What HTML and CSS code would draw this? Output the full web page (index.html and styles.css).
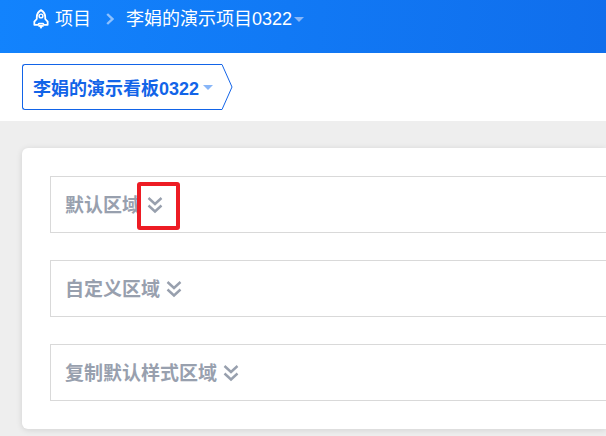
FILE: index.html
```html
<!DOCTYPE html>
<html lang="zh-CN">
<head>
  <meta charset="UTF-8">
  <meta name="viewport" content="width=device-width, initial-scale=1.0">
  <title>李娟的演示项目0322</title>
  <link rel="stylesheet" href="styles.css">
</head>
<body>
  <svg class="sprite" aria-hidden="true">
    <symbol id="double-down" viewBox="0 0 16 18">
      <path d="M1.5 2 L8 8 L14.5 2 M1.5 9.5 L8 15.5 L14.5 9.5" fill="none" stroke="currentColor" stroke-width="2.4"/>
    </symbol>
  </svg>

  <header class="header">
    <a class="header-link" href="#">
      <svg class="rocket" viewBox="0 0 14 18" aria-hidden="true">
        <path d="M7 1 C4.6 2.4 3.2 4.6 3.2 7.4 V9 L1 11.4 V14.2 H4.4 L5.2 13.2 H8.8 L9.6 14.2 H13 V11.4 L10.8 9 V7.4 C10.8 4.6 9.4 2.4 7 1 Z" fill="none" stroke="currentColor" stroke-width="1.6" stroke-linejoin="round"/>
        <circle cx="7" cy="6.3" r="1.7" fill="none" stroke="currentColor" stroke-width="1.3"/>
        <path d="M4.6 14.4 H9.4 V16 H8.4 L7 18 L5.6 16 H4.6 Z" fill="currentColor"/>
      </svg>
      <span>项目</span>
    </a>
    <svg class="separator" viewBox="0 0 8 12" aria-hidden="true">
      <path d="M1.2 1 L6.4 6 L1.2 11" fill="none" stroke="currentColor" stroke-width="2.4"/>
    </svg>
    <button type="button" class="project-btn">李娟的演示项目0322<span class="caret"></span></button>
  </header>

  <nav class="board-bar">
    <button type="button" class="board-btn">
      <span class="board-name">李娟的演示看板0322<span class="caret"></span></span>
      <svg class="board-tip" viewBox="0 0 11 46" aria-hidden="true">
        <path d="M0 0.5 L10 23 L0 45.5" fill="none" stroke="currentColor"/>
      </svg>
    </button>
  </nav>

  <main class="content">
    <div class="panel">
      <section class="area">
        <h2>默认区域</h2>
        <button type="button" class="toggle-btn marked" aria-label="展开默认区域">
          <svg viewBox="0 0 16 18"><use href="#double-down"/></svg>
        </button>
      </section>
      <section class="area">
        <h2>自定义区域</h2>
        <button type="button" class="toggle-btn" aria-label="展开自定义区域">
          <svg viewBox="0 0 16 18"><use href="#double-down"/></svg>
        </button>
      </section>
      <section class="area">
        <h2>复制默认样式区域</h2>
        <button type="button" class="toggle-btn" aria-label="展开复制默认样式区域">
          <svg viewBox="0 0 16 18"><use href="#double-down"/></svg>
        </button>
      </section>
    </div>
  </main>
</body>
</html>
```

FILE: styles.css
```css
* {
  box-sizing: border-box;
}

body {
  margin: 0;
  min-height: 100vh;
  font-family: "Liberation Sans", "Noto Sans CJK SC", sans-serif;
  background-color: #eee;
}

button {
  padding: 0;
  border: none;
  background: none;
  font-family: inherit;
  cursor: pointer;
}

svg {
  display: block;
}

.sprite {
  display: none;
}

/* Top bar */
.header {
  display: flex;
  align-items: center;
  height: 53px;
  padding: 0 33px 15px;
  color: #fff;
  font-size: 18px;
  line-height: 24px;
  background: linear-gradient(95deg, #1283fd, #106eec);
}

.header-link {
  display: flex;
  align-items: center;
  gap: 6px;
  color: inherit;
  text-decoration: none;
}

.rocket {
  width: 16px;
  height: 20px;
}

.separator {
  width: 8px;
  height: 12px;
  margin: 0 12px 0 15px;
  color: #8dc1fe;
}

.project-btn {
  display: flex;
  align-items: center;
  gap: 2px;
  color: inherit;
  font-size: 18px;
  line-height: 24px;
}

.caret {
  border: 5px solid transparent;
  border-top-color: #88b6f8;
  border-bottom: none;
}

/* Board switcher */
.board-bar {
  display: flex;
  padding: 11px 22px;
  background-color: #fff;
}

.board-btn {
  display: flex;
  color: #1264e8;
}

.board-name {
  display: flex;
  align-items: center;
  gap: 4px;
  height: 46px;
  padding: 0 9px 0 10px;
  border: 1px solid #1264e8;
  border-right: none;
  border-radius: 3px 0 0 3px;
  font-size: 18px;
  font-weight: bold;
}

.board-tip {
  width: 11px;
  height: 46px;
}

/* Areas */
.content {
  padding: 27px 0 7px 22px;
}

.panel {
  display: flex;
  flex-direction: column;
  gap: 27px;
  padding: 28px 0 28px 28px;
  border-radius: 6px 0 0 6px;
  background-color: #fff;
  box-shadow: 0 1px 6px rgba(0, 0, 0, 0.12);
}

.area {
  display: flex;
  align-items: center;
  gap: 6px;
  height: 57px;
  padding-left: 14px;
  border: 1px solid #d9d9d9;
  border-right: none;
  color: #98a0ae;
}

.area h2 {
  margin: 0;
  padding-top: 2px;
  font-size: 19px;
  line-height: 28px;
}

.toggle-btn {
  position: relative;
  color: inherit;
}

.toggle-btn svg {
  width: 16px;
  height: 18px;
}

/* Red frame drawn over the toggle */
.marked::after {
  content: "";
  position: absolute;
  inset: -14px -17px -16px -10px;
  border: 4px solid #ed1c24;
  border-radius: 3px;
}
```
